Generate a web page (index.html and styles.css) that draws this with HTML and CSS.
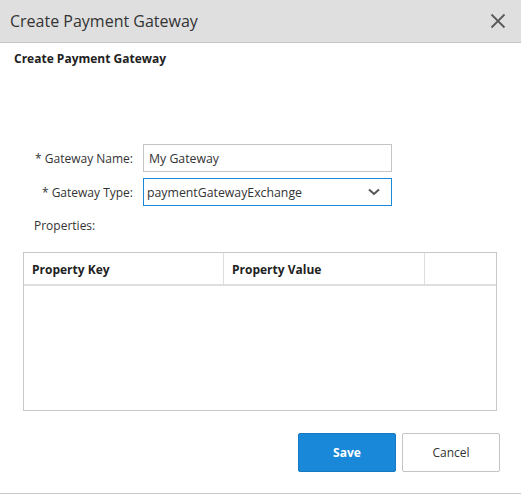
FILE: index.html
```html
<!DOCTYPE html>
<html>
<head>
<meta charset="utf-8">
<link rel="stylesheet" href="styles.css">
</head>
<body>
<div class="dialog">
  <div class="header">
    <div class="title">Create Payment Gateway</div>
    <svg class="close" width="16" height="16" viewBox="0 0 16 16"><path d="M1.5 1.5 L14.5 14.5 M14.5 1.5 L1.5 14.5" stroke="#5a5a5a" stroke-width="1.8" fill="none"/></svg>
  </div>
  <div class="content">
    <div class="subtitle">Create Payment Gateway</div>
    <div class="form">
      <label class="label">* Gateway Name:</label>
      <div class="input">My Gateway</div>
      <label class="label">* Gateway Type:</label>
      <div class="select">
        <span>paymentGatewayExchange</span>
        <svg width="12" height="8" viewBox="0 0 12 8"><path d="M1 1.5 L6 6 L11 1.5" stroke="#555" stroke-width="2" fill="none"/></svg>
      </div>
    </div>
    <div class="props-label">Properties:</div>
    <div class="table">
      <div class="thead">
        <div class="th c1">Property Key</div>
        <div class="th c2">Property Value</div>
        <div class="th c3"></div>
      </div>
      <div class="tbody"></div>
    </div>
    <div class="actions">
      <button class="btn primary">Save</button>
      <button class="btn">Cancel</button>
    </div>
  </div>
</div>
</body>
</html>
```

FILE: styles.css
```css
html, body {
  margin: 0;
  padding: 0;
  background: #fff;
}
body {
  font-family: "Open Sans", "Liberation Sans", sans-serif;
  color: #333;
}
.dialog {
  width: 521px;
  height: 494px;
  border-bottom: 1px solid #c8c8c8;
  box-sizing: border-box;
  display: flex;
  flex-direction: column;
}
.header {
  height: 42px;
  background: #dfdfdf;
  border-bottom: 1px solid #c4c4c4;
  display: flex;
  align-items: center;
  justify-content: space-between;
  padding: 0 15px 0 10px;
  flex-shrink: 0;
}
.title {
  font-size: 16px;
  color: #333;
}
.close {
  display: block;
}
.content {
  flex: 1;
  display: flex;
  flex-direction: column;
}
.subtitle {
  font-size: 12px;
  font-weight: bold;
  color: #222;
  padding: 7px 0 0 14px;
  line-height: 17px;
}
.form {
  display: grid;
  grid-template-columns: 133px 249px;
  column-gap: 10px;
  row-gap: 6px;
  align-items: center;
  margin-top: 77px;
}
.label {
  font-size: 12px;
  text-align: right;
  color: #333;
}
.input, .select {
  height: 28px;
  box-sizing: border-box;
  border: 1px solid #c4c4c4;
  font-size: 12.3px;
  color: #333;
  display: flex;
  align-items: center;
  padding: 0 5px;
}
.select {
  border-color: #1a88d8;
  justify-content: space-between;
  padding: 0 11px 0 3px;
}
.props-label {
  font-size: 12px;
  margin: 11px 0 0 34px;
  line-height: 17px;
}
.table {
  margin: 18px 0 0 23px;
  width: 474px;
  height: 159px;
  box-sizing: border-box;
  border: 1px solid #c8c8c8;
  display: flex;
  flex-direction: column;
}
.thead {
  display: flex;
  height: 31px;
  border-bottom: 2px solid #dedede;
}
.th {
  font-size: 12px;
  font-weight: bold;
  color: #222;
  display: flex;
  align-items: center;
  padding-left: 8px;
  padding-top: 2px;
  box-sizing: border-box;
}
.c1 { width: 200px; border-right: 1px solid #dedede; }
.c2 { width: 201px; border-right: 1px solid #dedede; }
.c3 { flex: 1; }
.actions {
  display: flex;
  justify-content: flex-end;
  gap: 6px;
  margin: 22px 21px 0 0;
}
.btn {
  width: 98px;
  height: 39px;
  font-family: "Open Sans", "Liberation Sans", sans-serif;
  font-size: 12px;
  background: #fff;
  border: 1px solid #c4c4c4;
  border-radius: 2px;
  color: #333;
  padding: 0;
}
.btn.primary {
  background: #1a88d8;
  border-color: #1679c4;
  color: #fff;
  font-weight: bold;
}
```
